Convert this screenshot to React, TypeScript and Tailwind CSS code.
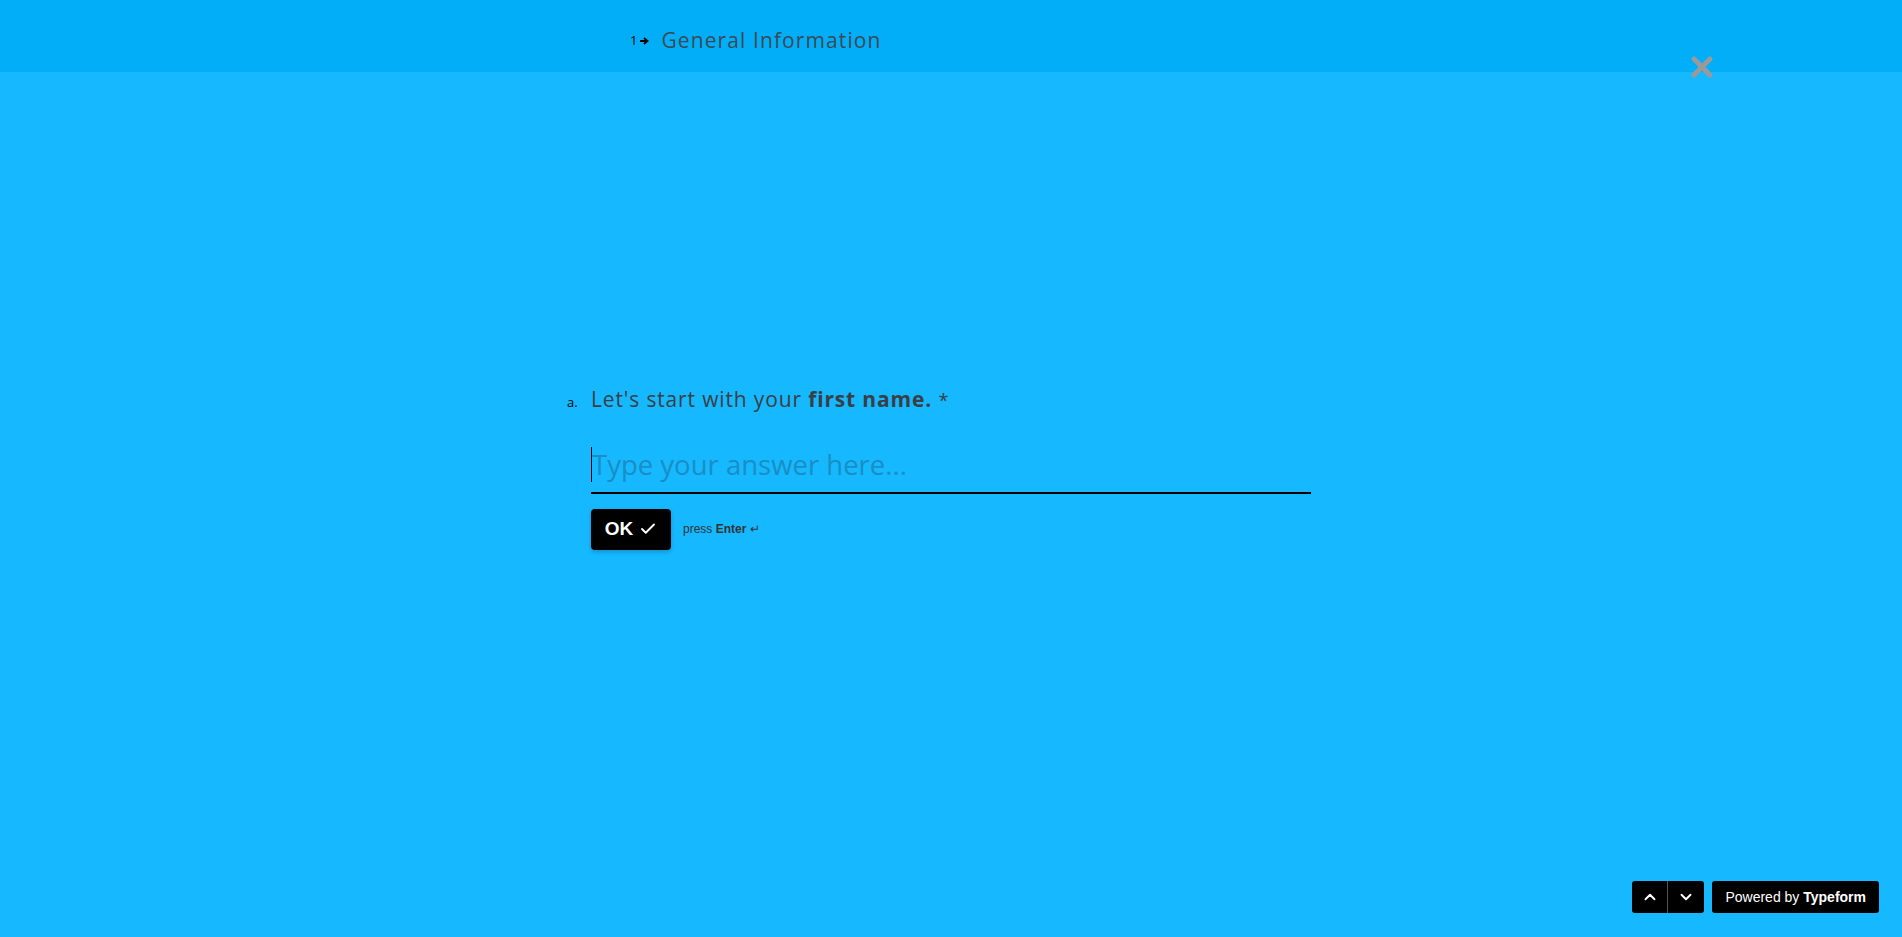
import React from 'react';
import { ChevronUp, ChevronDown, Check } from 'lucide-react';

function CloseIcon() {
  return (
    <svg width="24" height="24" viewBox="0 0 24 24" className="text-[#9a9a9a]">
      <path d="M4 4 L20 20 M20 4 L4 20" stroke="currentColor" strokeWidth="5" strokeLinecap="round" />
    </svg>
  );
}

export default function App() {
  return (
    <div className="relative h-[937px] w-full overflow-hidden bg-[#16b8ff] font-['Open_Sans',sans-serif]">
      <header className="flex h-[72px] items-center bg-[#02aef8] pl-[630px] pt-[9px]">
        <span className="text-[13px] text-black">1</span>
        <svg width="10" height="10" viewBox="0 0 10 10" className="ml-[2px] mr-[12px]">
          <path d="M1 5 H8 M5 2 L8.5 5 L5 8" stroke="black" strokeWidth="1.8" fill="none" />
        </svg>
        <span className="text-[21px] tracking-[1.1px] text-[#3b4a55]">General Information</span>
      </header>

      <button className="absolute left-[1690px] top-[55px]">
        <CloseIcon />
      </button>

      <main className="mx-auto w-[720px] pt-[312px]">
        <div className="-ml-[24px] flex items-baseline text-[#3a3f44]">
          <span className="w-[24px] text-[13px] text-black">a.</span>
          <p className="text-[21px] tracking-[0.85px]">
            Let's start with your <span className="font-bold">first name.</span>{' '}
            <span className="text-[18px]">*</span>
          </p>
        </div>

        <div className="mt-[29px] border-b-2 border-black pb-[7px]">
          <div className="flex items-center">
            <span className="h-[35px] w-px bg-black" />
            <span className="text-[27.5px] leading-[40px] text-[#1a8ec4]">Type your answer here...</span>
          </div>
        </div>

        <div className="mt-[15px] flex items-center">
          <button className="flex h-[41px] w-[80px] items-center justify-center gap-[6px] rounded-[4px] bg-black font-['Liberation_Sans',sans-serif] text-[19px] font-bold text-white shadow-[0_2px_4px_rgba(0,0,0,0.2)]">
            OK <Check size={18} strokeWidth={2.5} />
          </button>
          <span className="ml-[12px] font-['Liberation_Sans',sans-serif] text-[12px] text-[#333]">
            press <span className="font-bold">Enter</span> ↵
          </span>
        </div>
      </main>

      <div className="absolute bottom-[24px] right-[23px] flex gap-[8px]">
        <div className="flex h-[32px] overflow-hidden rounded-[3px] bg-black">
          <button className="flex w-[36px] items-center justify-center border-r border-[#555] text-white">
            <ChevronUp size={18} strokeWidth={2.5} />
          </button>
          <button className="flex w-[36px] items-center justify-center text-white">
            <ChevronDown size={18} strokeWidth={2.5} />
          </button>
        </div>
        <div className="flex h-[32px] items-center rounded-[3px] bg-black px-[13px] font-['Liberation_Sans',sans-serif] text-[14px] text-white">
          Powered by&nbsp;<span className="font-bold">Typeform</span>
        </div>
      </div>
    </div>
  );
}
